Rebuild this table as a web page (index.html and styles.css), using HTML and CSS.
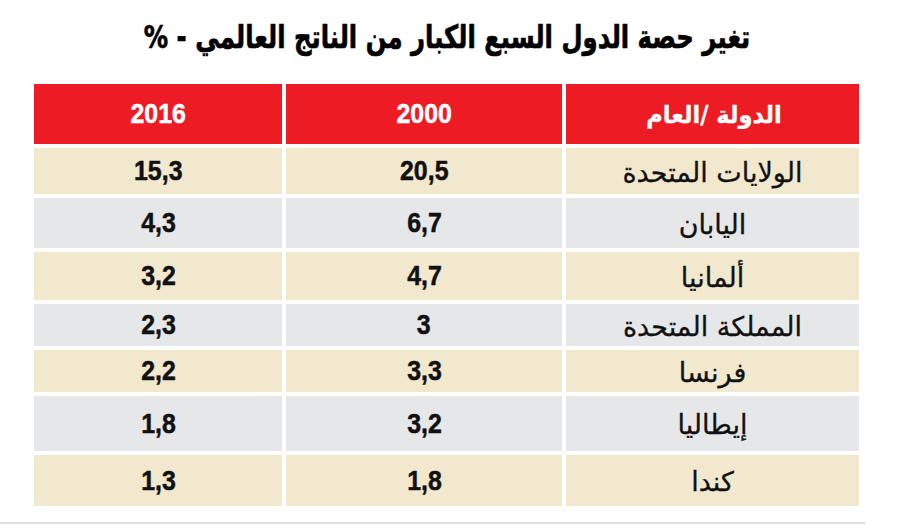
FILE: index.html
```html
<!DOCTYPE html>
<html lang="ar">
<head>
<meta charset="utf-8">
<title>تغير حصة الدول السبع الكبار من الناتج العالمي</title>
<link rel="stylesheet" href="styles.css">
</head>
<body>
<div class="page">
  <h1 class="title"><span class="title-text">تغير حصة الدول السبع الكبار من الناتج العالمي - %</span></h1>
  <div class="table" dir="rtl">
    <div class="cell head name"><span>الدولة /العام</span></div>
    <div class="cell head num"><span>2000</span></div>
    <div class="cell head num"><span>2016</span></div>

    <div class="cell beige name">الولايات المتحدة</div>
    <div class="cell beige num"><span>20,5</span></div>
    <div class="cell beige num"><span>15,3</span></div>

    <div class="cell grey name">اليابان</div>
    <div class="cell grey num"><span>6,7</span></div>
    <div class="cell grey num"><span>4,3</span></div>

    <div class="cell beige name">ألمانيا</div>
    <div class="cell beige num"><span>4,7</span></div>
    <div class="cell beige num"><span>3,2</span></div>

    <div class="cell grey name">المملكة المتحدة</div>
    <div class="cell grey num"><span>3</span></div>
    <div class="cell grey num"><span>2,3</span></div>

    <div class="cell beige name">فرنسا</div>
    <div class="cell beige num"><span>3,3</span></div>
    <div class="cell beige num"><span>2,2</span></div>

    <div class="cell grey name">إيطاليا</div>
    <div class="cell grey num"><span>3,2</span></div>
    <div class="cell grey num"><span>1,8</span></div>

    <div class="cell beige name">كندا</div>
    <div class="cell beige num"><span>1,8</span></div>
    <div class="cell beige num"><span>1,3</span></div>
  </div>
  <div class="rule"></div>
</div>
</body>
</html>
```

FILE: styles.css
```css
html, body {
  margin: 0;
  padding: 0;
  background: #ffffff;
}

.page {
  width: 904px;
  height: 525px;
  display: flex;
  flex-direction: column;
  align-items: flex-start;
}

.title {
  margin: 12px 0 0 34px;
  width: 825px;
  height: 72px;
  display: flex;
  justify-content: center;
  align-items: flex-start;
  font-family: "DejaVu Sans", sans-serif;
  font-weight: bold;
  font-size: 32px;
  line-height: 50px;
  color: #000;
  direction: rtl;
}

.title-text {
  display: inline-block;
  white-space: nowrap;
  transform: scaleX(0.76);
  -webkit-text-stroke: 0.7px #000;
}

.table {
  margin: 0 0 0 34px;
  display: grid;
  grid-template-columns: 293px 276px 248px;
  grid-template-rows: 60px 46px 50px 48px 42px 42px 55px 51px;
  gap: 4px;
  width: 825px;
}

.cell {
  display: flex;
  align-items: center;
  justify-content: center;
  color: #111;
}

.head {
  background: #ed1c24;
  color: #fff;
}

.beige {
  background: #f2e8ce;
}

.grey {
  background: #e6e7e9;
}

.name {
  font-family: "DejaVu Sans", sans-serif;
  font-size: 27px;
  padding-top: 2px;
  -webkit-text-stroke: 0.3px #111;
}

.head.name {
  font-weight: bold;
  font-size: 24px;
  -webkit-text-stroke: 0.3px #fff;
  padding-left: 4px;
}

.head.name span {
  display: inline-block;
  transform: scaleX(0.94);
}

.num {
  font-family: "Liberation Sans", sans-serif;
  font-weight: bold;
  font-size: 28px;
  direction: ltr;
  -webkit-text-stroke: 0.5px #111;
}

.head.num {
  -webkit-text-stroke: 0.5px #fff;
}

.num span {
  display: inline-block;
  transform: scaleX(0.89);
}

.rule {
  margin-top: 16px;
  width: 865px;
  height: 2px;
  background: #dedede;
}
```
